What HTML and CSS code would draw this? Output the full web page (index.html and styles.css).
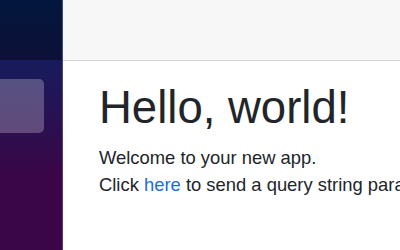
FILE: index.html
```html
<!DOCTYPE html>
<html lang="en">
  <head>
    <meta charset="UTF-8" />
    <meta name="viewport" content="width=device-width, initial-scale=1.0" />
    <title>Home</title>
    <link rel="stylesheet" href="styles.css">
  </head>
  <body>
    <div class="page">
      <div class="sidebar">
        <div class="sidebar-top"></div>
        <nav class="nav">
          <a class="nav-link active" href="#"></a>
        </nav>
      </div>

      <main class="main">
        <div class="top-row"></div>
        <article class="content">
          <h1>Hello, world!</h1>
          <div class="line">Welcome to your new app.</div>
          <div class="line">Click <a href="#">here</a> to send a query string parameter to the server.</div>
        </article>
      </main>
    </div>
  </body>
</html>
```

FILE: styles.css
```css
html,
body {
  margin: 0;
  padding: 0;
  height: 100%;
  overflow: hidden;
}

body {
  font-family: "Liberation Sans", Arial, sans-serif;
  font-size: 18.4px;
  line-height: 27px;
  color: #212529;
  background-color: white;
}

.page {
  display: flex;
  height: 100%;
}

.sidebar {
  flex: 0 0 62px;
  border-right: 1px solid rgba(255, 255, 255, 0.2);
  background-image: linear-gradient(180deg, rgb(5, 39, 103) 0%, #3a0647 70%);
}

.sidebar-top {
  height: 60px;
  background-color: rgba(0, 0, 0, 0.4);
}

.nav {
  padding: 19px 18px 0 0;
}

.nav-link {
  display: block;
  height: 54px;
  border-radius: 0 5px 5px 0;
}

.nav-link.active {
  background-color: rgba(255, 255, 255, 0.25);
}

.main {
  flex: 1;
  min-width: 0;
}

.top-row {
  height: 60px;
  background-color: #f7f7f7;
  border-bottom: 1px solid #d6d5d5;
}

.content {
  padding: 20px 0 0 36px;
  white-space: nowrap;
}

h1 {
  margin: 0 0 9px;
  font-size: 45.5px;
  font-weight: 500;
  line-height: 54px;
}

.line a {
  color: #1a6fd6;
  text-decoration: none;
}
```
